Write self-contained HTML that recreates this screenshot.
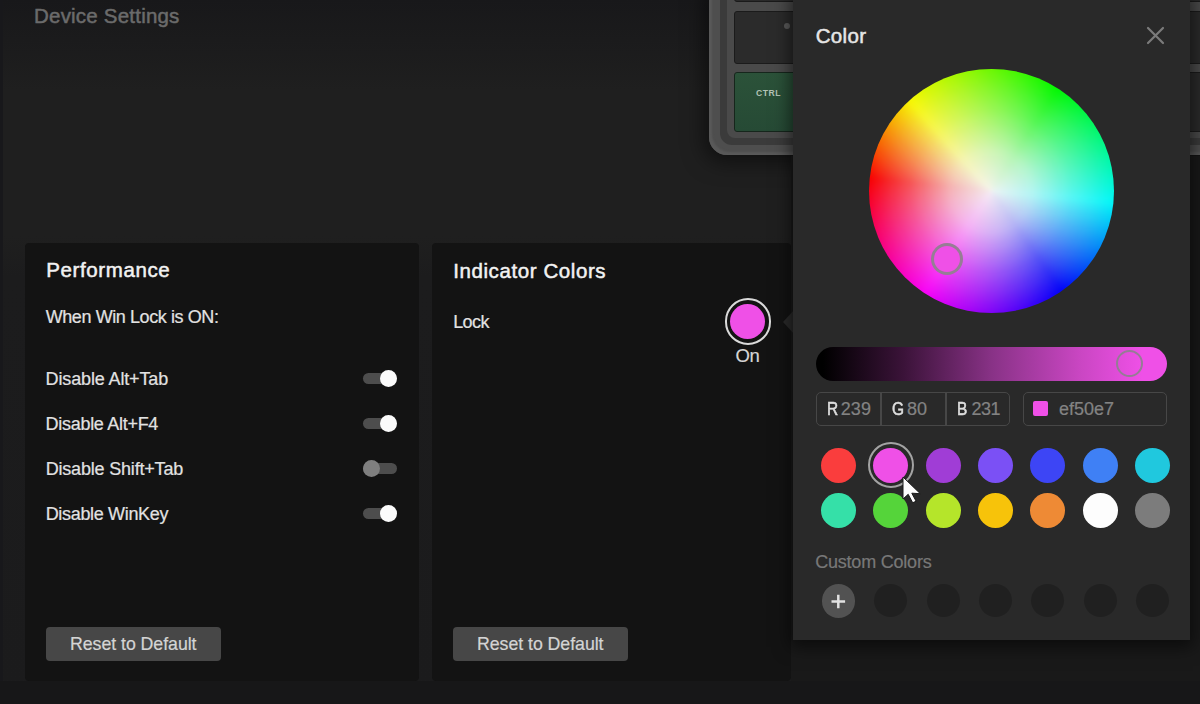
<!DOCTYPE html>
<html><head><meta charset="utf-8">
<style>
*{margin:0;padding:0;box-sizing:border-box}
html,body{width:1200px;height:704px;overflow:hidden;background:linear-gradient(to bottom,#18181a 0px,#1b1b1c 40px,#1f1f1f 90px,#1f1f1f 704px);font-family:"Liberation Sans",sans-serif;position:relative}
.abs{position:absolute}
.t{position:absolute;white-space:nowrap;line-height:1}
.panel{position:absolute;background:#131313;top:243px;height:438px;border-radius:4px}
.bottom{position:absolute;left:0;top:681px;width:1200px;height:23px;background:#171718}
.lbl{font-size:17px;color:#e2e2e2;-webkit-text-stroke:0.2px currentColor}
.h{font-size:19.5px;color:#f2f2f2}
.sb{-webkit-text-stroke:0.5px currentColor}
.btn{position:absolute;width:175px;height:34px;background:#474747;border-radius:4px;top:627px}
.btn span{position:absolute;left:24px;top:8.6px;font-size:17.75px;letter-spacing:-0.05px;-webkit-text-stroke:0.2px currentColor;color:#d4d4d4;line-height:1;white-space:nowrap}
.tg{position:absolute;left:363px;width:34px;height:11px}
.tg .tr{position:absolute;left:0;top:0;width:34px;height:11px;border-radius:6px;background:#4d4d4d}
.tg .kn{position:absolute;top:-3px;width:17px;height:17px;border-radius:50%;background:#fbfbfb}
.tg.off .kn{left:0;background:#7f7f7f}
.tg.on .kn{left:17px}
.sw{position:absolute;width:35px;height:35px;border-radius:50%}
.rl{font-size:18px;color:#dedede;-webkit-text-stroke:0.55px #dedede;transform:scaleX(0.86);transform-origin:0 0}
.nm{font-size:18px;color:#838383;-webkit-text-stroke:0.2px currentColor}
.cc{position:absolute;width:33px;height:33px;border-radius:50%;background:#202020;top:584px}
</style></head><body>

<!-- keyboard -->
<div class="abs" style="left:709px;top:-20px;width:520px;height:175px;background:#4e4e4e;border-radius:0 0 0 18px;box-shadow:inset 3px -3px 2px #595959,-4px 6px 22px rgba(0,0,0,0.55)"></div>
<div class="abs" style="left:720px;top:-20px;width:500px;height:165px;background:#3b3b3b;border-radius:0 0 0 12px"></div>
<div class="abs" style="left:727px;top:-20px;width:500px;height:158px;background:#4a4a4a;border-radius:0 0 0 8px"></div>
<div class="abs" style="left:734px;top:-20px;width:480px;height:22px;background:#2a2a2a;border:1px solid #1a1a1a;border-radius:3px"></div>
<div class="abs" style="left:734px;top:11px;width:90px;height:53px;background:#2b2b2b;border:1.5px solid #1b1b1b;border-radius:3px"></div>
<div class="abs" style="left:832px;top:11px;width:480px;height:53px;background:#2b2b2b;border:1.5px solid #1b1b1b;border-radius:3px"></div>
<div class="abs" style="left:784px;top:23px;width:6px;height:6px;background:#5a5a5a;border-radius:50%"></div>
<div class="abs" style="left:734px;top:72px;width:90px;height:60px;background:linear-gradient(#2b5239,#264a35);border:1.5px solid #16261c;border-radius:3px"></div>
<div class="abs" style="left:832px;top:72px;width:480px;height:60px;background:#2b2b2b;border:1.5px solid #1b1b1b;border-radius:3px"></div>
<div class="t" style="left:756px;top:88.5px;font-size:8.6px;font-weight:bold;color:#b3c3b5;letter-spacing:0.5px">CTRL</div>

<div class="t sb" style="left:34px;top:5.8px;font-size:20.5px;letter-spacing:0.21px;color:#6b6b6b">Device Settings</div>

<!-- performance panel -->
<div class="abs" style="left:0;top:236px;width:791px;height:468px;background:linear-gradient(to bottom,#1f1f1f 0px,#1c1c1d 40px,#1b1b1c 100%)"></div>
<div class="abs" style="left:0;top:0;width:3px;height:704px;background:#18181b"></div>
<div class="panel" style="left:25px;width:394px"></div>
<div class="t h sb" style="left:46.3px;top:260.3px;font-size:20.5px;letter-spacing:0.6px">Performance</div>
<div class="t lbl" style="left:45.7px;top:307.7px;font-size:18px;letter-spacing:-0.41px">When Win Lock is ON:</div>
<div class="t lbl" style="left:45.6px;top:369.8px;font-size:18px;letter-spacing:-0.14px">Disable Alt+Tab</div>
<div class="t lbl" style="left:45.6px;top:414.9px;font-size:18px;letter-spacing:-0.29px">Disable Alt+F4</div>
<div class="t lbl" style="left:45.7px;top:459.9px;font-size:18px;letter-spacing:-0.19px">Disable Shift+Tab</div>
<div class="t lbl" style="left:45.7px;top:505px;font-size:18px;letter-spacing:-0.33px">Disable WinKey</div>
<div class="tg on" style="top:373px"><div class="tr"></div><div class="kn"></div></div>
<div class="tg on" style="top:418px"><div class="tr"></div><div class="kn"></div></div>
<div class="tg off" style="top:463px"><div class="tr"></div><div class="kn"></div></div>
<div class="tg on" style="top:508px"><div class="tr"></div><div class="kn"></div></div>
<div class="btn" style="left:46px"><span>Reset to Default</span></div>

<!-- indicator panel -->
<div class="panel" style="left:432px;width:359px"></div>
<div class="t h sb" style="left:453.2px;top:260.5px;font-size:20.5px;letter-spacing:0.59px">Indicator Colors</div>
<div class="t lbl" style="left:453.2px;top:312.5px;font-size:18px;letter-spacing:-0.58px">Lock</div>
<div class="abs" style="left:724.5px;top:298px;width:46.5px;height:46.5px;border-radius:50%;border:2.5px solid #dadada"></div>
<div class="abs" style="left:730px;top:304px;width:35px;height:35px;border-radius:50%;background:#ef50e7"></div>
<div class="t lbl" style="left:735.5px;top:346.5px;font-size:18.5px;letter-spacing:-0.4px;color:#d6d6d6">On</div>
<div class="btn" style="left:453px"><span>Reset to Default</span></div>

<!-- popup -->
<div class="abs" style="left:791px;top:156px;width:409px;height:525px;background:#191919"></div>
<div class="abs" style="left:783px;top:309.5px;width:0;height:0;border-top:12px solid transparent;border-bottom:12px solid transparent;border-right:11px solid #2a2a2a"></div>
<div class="abs" style="left:793px;top:-10px;width:396.5px;height:649.5px;background:#292929;box-shadow:0 4px 16px 3px rgba(0,0,0,0.55)"></div>
<div class="t sb" style="left:815.7px;top:25.8px;font-size:20.5px;letter-spacing:0.32px;color:#e6e6e6">Color</div>
<svg class="abs" style="left:1145px;top:25px" width="21" height="21" viewBox="0 0 21 21"><path d="M3 3L18 18M18 3L3 18" stroke="#7b7b7b" stroke-width="2.2" stroke-linecap="round"/></svg>

<div class="abs" style="left:868.5px;top:68.5px;width:245px;height:244px;border-radius:50%;overflow:hidden">
<div class="abs" style="left:-10px;top:-10px;width:265px;height:264px;filter:blur(2px) brightness(0.97);background:radial-gradient(circle closest-side,rgba(252,252,252,0.97) 0%,rgba(252,252,252,0.74) 30%,rgba(252,252,252,0.34) 62%,rgba(252,252,252,0) 93%),conic-gradient(from 0deg,#6eff00 0deg,#00ff00 33deg,#00ffff 95deg,#0000ff 145deg,#ff00ff 213deg,#ff0000 276deg,#ffff00 318deg,#6eff00 360deg)"></div>
</div>
<div class="abs" style="left:931px;top:242.5px;width:32px;height:32px;border-radius:50%;border:3px solid rgba(140,130,140,0.9);background:#ef50e7"></div>

<div class="abs" style="left:816px;top:346.5px;width:351px;height:34px;border-radius:17px;background:linear-gradient(to right,#000 2%,#3b1339 25%,#883286 50%,#c946c2 75%,#ef50e7 93%)"></div>
<div class="abs" style="left:1116px;top:350px;width:27px;height:27px;border-radius:50%;border:2px solid rgba(140,130,140,0.9)"></div>

<div class="abs" style="left:816px;top:392px;width:194px;height:34px;border:1.5px solid #474747;border-radius:5px"></div>
<div class="abs" style="left:880px;top:392px;width:1.5px;height:34px;background:#474747"></div>
<div class="abs" style="left:945px;top:392px;width:1.5px;height:34px;background:#474747"></div>
<div class="t rl" style="left:827px;top:400.2px">R</div>
<div class="t nm" style="left:840.8px;top:400.2px;letter-spacing:0.05px">239</div>
<div class="t rl" style="left:891.5px;top:400.2px">G</div>
<div class="t nm" style="left:907.1px;top:400.2px;letter-spacing:-0.2px">80</div>
<div class="t rl" style="left:957.1px;top:400.2px">B</div>
<div class="t nm" style="left:971.5px;top:400.2px;letter-spacing:-0.5px">231</div>

<div class="abs" style="left:1023px;top:392px;width:144px;height:34px;border:1.5px solid #474747;border-radius:5px"></div>
<div class="abs" style="left:1033px;top:401px;width:15px;height:15px;border-radius:2px;background:#ef50e7"></div>
<div class="t nm" style="left:1058.9px;top:400.1px">ef50e7</div>

<!-- swatches -->
<div class="sw" style="left:820.5px;top:447.5px;background:#fa3d3d"></div>
<div class="abs" style="left:867.5px;top:442px;width:46px;height:46px;border-radius:50%;border:2px solid #a3a3a3"></div>
<div class="sw" style="left:873px;top:447.5px;background:#ef50e7"></div>
<div class="sw" style="left:925.5px;top:447.5px;background:#a03dd6"></div>
<div class="sw" style="left:978px;top:447.5px;background:#7b50f5"></div>
<div class="sw" style="left:1030px;top:447.5px;background:#3d45f5"></div>
<div class="sw" style="left:1082.5px;top:447.5px;background:#3f80f5"></div>
<div class="sw" style="left:1135px;top:447.5px;background:#20c8de"></div>

<div class="sw" style="left:820.5px;top:493px;background:#35e0a8"></div>
<div class="sw" style="left:873px;top:493px;background:#55d43a"></div>
<div class="sw" style="left:925.5px;top:493px;background:#b5e52a"></div>
<div class="sw" style="left:978px;top:493px;background:#f7c30a"></div>
<div class="sw" style="left:1030px;top:493px;background:#ee8a35"></div>
<div class="sw" style="left:1082.5px;top:493px;background:#fdfdfd"></div>
<div class="sw" style="left:1135px;top:493px;background:#7c7c7c"></div>

<div class="t" style="left:815.2px;top:552.7px;font-size:18px;letter-spacing:-0.21px;color:#787878;-webkit-text-stroke:0.2px currentColor">Custom Colors</div>
<div class="abs" style="left:821.5px;top:584.2px;width:33.8px;height:33.8px;border-radius:50%;background:#525252"></div>
<svg class="abs" style="left:830px;top:593px" width="17" height="17" viewBox="0 0 17 17"><path d="M8.3 1.7V15.2M1.5 8.5H15.1" stroke="#e2e2e2" stroke-width="2.5"/></svg>
<div class="cc" style="left:874px"></div>
<div class="cc" style="left:926.5px"></div>
<div class="cc" style="left:979px"></div>
<div class="cc" style="left:1031px"></div>
<div class="cc" style="left:1083.5px"></div>
<div class="cc" style="left:1136px"></div>

<!-- cursor -->
<svg class="abs" style="left:901.4px;top:475.2px" width="24" height="30" viewBox="0 0 24 30"><path d="M2.0 2.0L2.0 24.0L7.2 19.3L11.7 27.8L15.1 26.2L10.8 18.2L19.3 18.7Z" fill="#fdfdfd" stroke="#1a1a1a" stroke-width="1" stroke-linejoin="round"/></svg>

<div class="bottom"></div>
</body></html>
